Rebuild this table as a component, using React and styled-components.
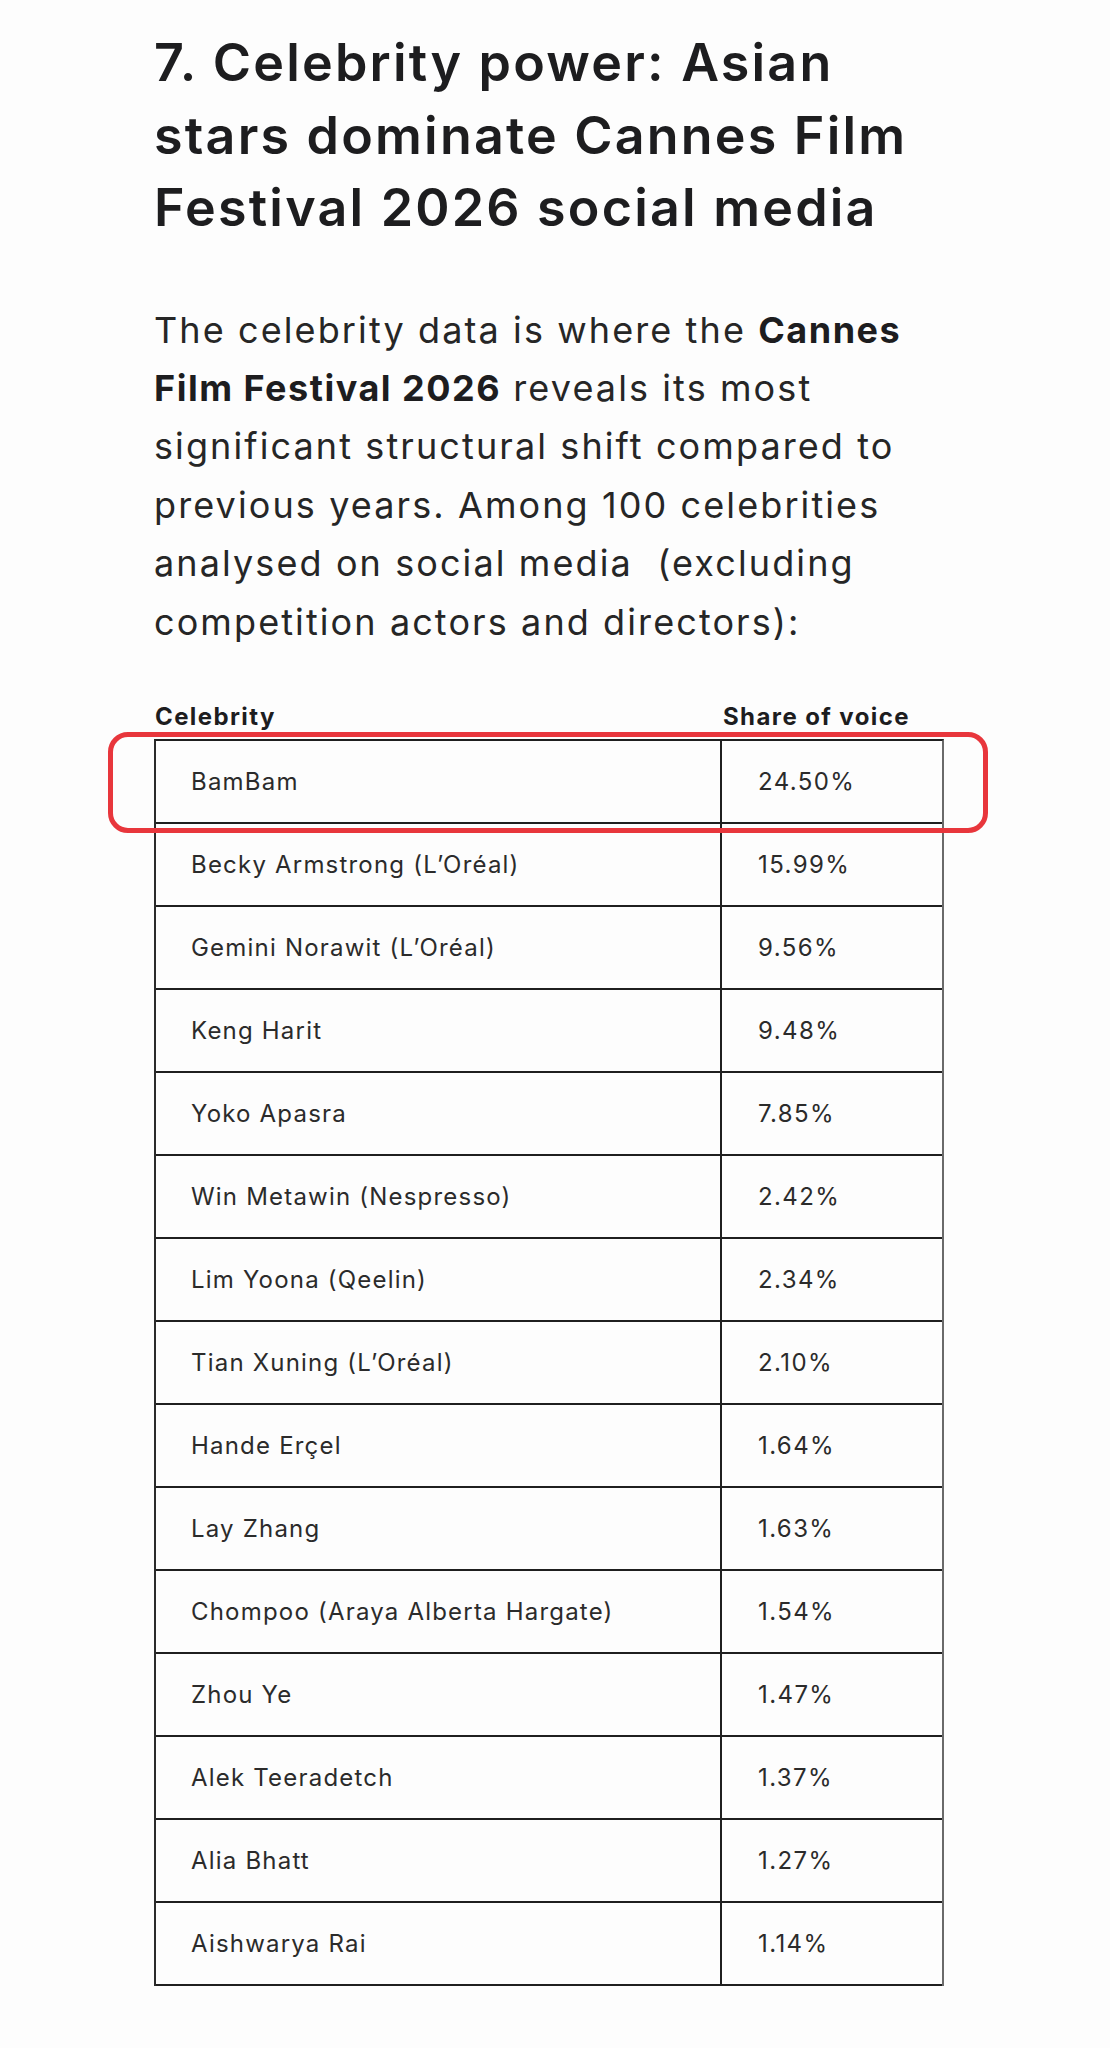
import React from 'react';
import styled, { createGlobalStyle } from 'styled-components';

const GlobalStyle = createGlobalStyle`
    html, body {
        margin: 0;
        padding: 0;
        background: #fdfdfd;
    }
    body {
        font-family: Inter, "Noto Sans", "Liberation Sans", sans-serif;
        color: #222;
    }
`;

const Page = styled.main`
    width: 1110px;
    min-height: 2048px;
    box-sizing: border-box;
    padding: 27px 0 0 154px;
`;

const Title = styled.h2`
    margin: 0;
    font-size: 52px;
    line-height: 72.5px;
    font-weight: 600;
    letter-spacing: 2.2px;
    color: #1d1d1f;
`;

const Lead = styled.p`
    margin: 56px 0 0;
    font-size: 36px;
    line-height: 58.4px;
    font-weight: 400;
    letter-spacing: 2.1px;
    color: #262626;

    strong {
        font-weight: 700;
        letter-spacing: 1.5px;
        color: #1d1d1f;
    }
`;

const TableWrap = styled.section`
    margin-top: 52px;
    width: 790px;
`;

const HeadRow = styled.div`
    display: grid;
    grid-template-columns: 566px 224px;
    font-size: 24px;
    line-height: 28px;
    font-weight: 700;
    letter-spacing: 1.4px;
    color: #1d1d1f;
    padding-bottom: 8px;
`;

const HeadCell = styled.div`
    padding-left: ${p => (p.$right ? '3px' : '1px')};
`;

const Table = styled.div`
    position: relative;
    border-top: 2px solid #1f1f1f;
    border-left: 2px solid #2a2a2a;
    border-right: 2px solid #6a6a6a;
`;

const Row = styled.div`
    display: grid;
    grid-template-columns: 564px 222px;
    height: 81px;
    border-bottom: 2px solid #1f1f1f;
`;

const Cell = styled.div`
    display: flex;
    align-items: center;
    padding-left: ${p => (p.$right ? '36px' : '35px')};
    border-left: ${p => (p.$right ? '2px solid #1f1f1f' : 'none')};
    font-size: 24px;
    letter-spacing: ${p => (p.$right ? '1.4px' : '1.2px')};
    color: #2b2b2b;
`;

const Highlight = styled.div`
    position: absolute;
    left: -48px;
    top: -9px;
    width: 880px;
    height: 101px;
    box-sizing: border-box;
    border: 5px solid #e8363c;
    border-radius: 20px;
    pointer-events: none;
`;

const rows = [
    ['BamBam', '24.50%'],
    ['Becky Armstrong (L\u2019Oréal)', '15.99%'],
    ['Gemini Norawit (L\u2019Oréal)', '9.56%'],
    ['Keng Harit', '9.48%'],
    ['Yoko Apasra', '7.85%'],
    ['Win Metawin (Nespresso)', '2.42%'],
    ['Lim Yoona (Qeelin)', '2.34%'],
    ['Tian Xuning (L\u2019Oréal)', '2.10%'],
    ['Hande Erçel', '1.64%'],
    ['Lay Zhang', '1.63%'],
    ['Chompoo (Araya Alberta Hargate)', '1.54%'],
    ['Zhou Ye', '1.47%'],
    ['Alek Teeradetch', '1.37%'],
    ['Alia Bhatt', '1.27%'],
    ['Aishwarya Rai', '1.14%'],
];

const App = () => {
    return (
        <Page>
            <GlobalStyle />
            <Title>
                7. Celebrity power: Asian<br />
                stars dominate Cannes Film<br />
                Festival 2026 social media
            </Title>
            <Lead>
                The celebrity data is where the <strong>Cannes</strong><br />
                <strong>Film Festival 2026</strong> reveals its most<br />
                significant structural shift compared to<br />
                previous years. Among 100 celebrities<br />
                analysed on social media&nbsp; (excluding<br />
                competition actors and directors):
            </Lead>
            <TableWrap>
                <HeadRow>
                    <HeadCell>Celebrity</HeadCell>
                    <HeadCell $right>Share of voice</HeadCell>
                </HeadRow>
                <Table>
                    {rows.map(([name, share]) => (
                        <Row key={name}>
                            <Cell>{name}</Cell>
                            <Cell $right>{share}</Cell>
                        </Row>
                    ))}
                    <Highlight />
                </Table>
            </TableWrap>
        </Page>
    );
};

export default App;
